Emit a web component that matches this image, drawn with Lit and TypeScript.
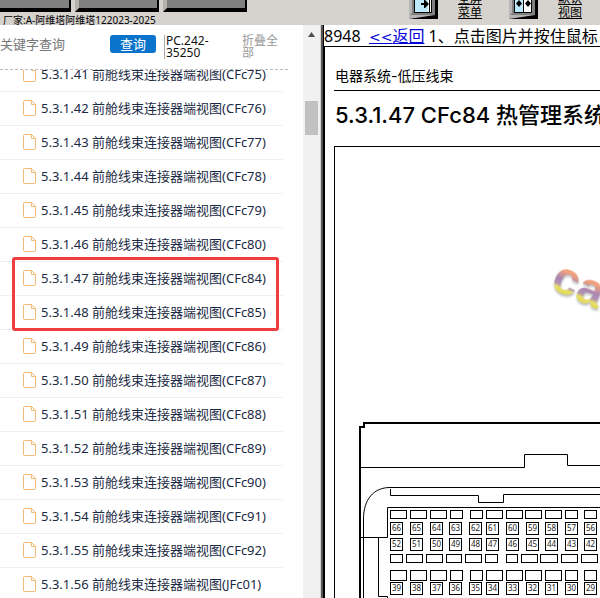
import { LitElement, html, svg, css } from "lit";
import { customElement } from "lit/decorators.js";

const sections = [
  ["41", "CFc75"], ["42", "CFc76"], ["43", "CFc77"], ["44", "CFc78"],
  ["45", "CFc79"], ["46", "CFc80"], ["47", "CFc84"], ["48", "CFc85"],
  ["49", "CFc86"], ["50", "CFc87"], ["51", "CFc88"], ["52", "CFc89"],
  ["53", "CFc90"], ["54", "CFc91"], ["55", "CFc92"], ["56", "JFc01"],
];

@customElement("nav-tree")
class NavTree extends LitElement {
  static styles = css`
    :host { display: flex; flex: none; width: 320px; min-height: 0; background: #fff; }
    .pane { flex: 1; display: flex; flex-direction: column; min-width: 0; }
    .search { display: flex; align-items: center; height: 45px; margin-right: 15px;
      border-bottom: 1px dashed #bbb; box-sizing: border-box; }
    .field { width: 110px; box-sizing: border-box; border: 0; padding: 0; margin: 0 0 7px; outline: 0;
      background: none; font: inherit; font-size: 13px; height: 20px; }
    .field::placeholder { color: #777; opacity: 1; }
    .go { border: 0; padding: 0; width: 46px; height: 18px; border-radius: 3px; background: #0a74cc;
      color: #fff; font: inherit; font-size: 13px; line-height: 18px; margin-bottom: 7px; }
    .model { margin-left: 8px; border-left: 1px solid #aaa; padding-left: 1px; width: 64px;
      font-size: 12px; line-height: 12px; color: #111; }
    .fold { margin-left: 12px; width: 40px; border: 0; padding: 0; background: none; text-align: left;
      font: inherit; font-size: 12px; line-height: 12px; color: #999; }
    .clip { flex: 1; min-height: 0; overflow: hidden; position: relative; }
    .list { list-style: none; margin: -12px 20px 0 0; padding: 0; }
    .row { height: 34px; box-sizing: border-box; border-bottom: 1px solid #f0f0f0; padding-left: 23px; }
    .link { display: flex; align-items: center; gap: 4px; height: 30px; font-size: 13px;
      color: #1b2a44; text-decoration: none; white-space: nowrap; }
    .doc { margin-top: 2px; }
    .mark { position: absolute; left: 12px; top: 187px; width: 267px; height: 74px; box-sizing: border-box;
      border: 3px solid #f03e40; border-radius: 3px; pointer-events: none; }
    .bar { position: relative; width: 17px; background: #f1f1f1; display: flex; flex-direction: column; align-items: center; }
    .thumb { margin-top: 76px; width: 13px; height: 34px; background: #c1c1c1; }
    .up { position: absolute; top: 7px; left: 5px; }
  `;
  render() {
    return html`
      <div class="pane">
        <div class="search">
          <input class="field" aria-label="关键字查询" placeholder="关键字查询" />
          <button class="go">查询</button>
          <div class="model">PC.242-<br />35250</div>
          <button class="fold">折叠全部</button>
        </div>
        <div class="clip">
          <ul class="list">
            ${sections.map(([n, code]) => html`<li class="row"><a class="link" href="#s${n}">
              <svg class="doc" width="14" height="16" viewBox="0 0 14 16" fill="none" stroke="#f3b873">
                <path d="M1.5 .5H8.5L12.5 4.5V14.5Q12.5 15.5 11.5 15.5H1.5Q.5 15.5 .5 14.5V1.5Q.5 .5 1.5 .5Z"/>
                <path d="M8.5 .5V4.5H12.5"/>
              </svg><span>5.3.1.${n} 前舱线束连接器端视图(${code})</span></a></li>`)}
          </ul>
          <div class="mark"></div>
        </div>
      </div>
      <div class="bar">
        <svg class="up" width="7" height="5"><path d="M0 5L3.5 0L7 5Z" fill="#505050"/></svg>
        <div class="thumb"></div>
      </div>`;
  }
}

const shortTop = [[212,259],[271,319],[331,378],[391,427],[451,487],[499,546],[559,606],[616,663],[676,724],[735,772],[794,830]];
const pins = [[212,247],[271,307],[331,367],[388,424],[447,484],[499,535],[558,593],[618,654],[677,713],[735,772],[794,830]];
const shortLow = [[212,247],[260,308],[320,367],[379,424],[437,484],[497,532],[559,593],[604,652],[662,713],[725,772],[784,832]];

const cells = (spans: number[][], y: number, h: number, first = 0) =>
  spans.map(([a, b], i) => {
    const x = Math.floor(320 + a / 3) + 0.5;
    const w = Math.round((b - a) / 3);
    return svg`<rect class="cell" x=${x} y=${y + 0.5} width=${w} height=${h} />
      ${first ? svg`<text class="pin" x=${x + w / 2} y=${y + 9}>${first - i}</text>` : ""}`;
  });

@customElement("wiring-sheet")
class WiringSheet extends LitElement {
  static styles = css`
    :host { display: flex; flex-direction: column; flex: 1; min-width: 0; overflow: hidden; background: #fff; color: #000; }
    .tip { height: 21px; line-height: 23px; font-size: 16px; white-space: pre; }
    .back { color: #0000d8; }
    .chev { font-family: "DejaVu Sans", sans-serif; font-size: 14px; }
    .page { flex: 1; min-height: 0; display: flex; flex-direction: column; border: solid #000; border-width: 1px 0 0 1px; padding-left: 9px; }
    .chapter { height: 44px; box-sizing: border-box; padding: 19px 0 0 1px; border-bottom: 1px solid #000;
      font: 14px/20px Inter, "Noto Sans CJK SC", sans-serif; white-space: nowrap; }
    .title { margin: 0; padding-left: 1px; height: 55px; font: 500 22px/48px Inter, "Noto Sans CJK SC", sans-serif; white-space: nowrap; }
    .figure { flex: 1; min-height: 0; border: solid #000; border-width: 1px 0 0 1px; overflow: hidden; }
    .art { display: block; width: 100%; height: 100%; }
    .line, .cell { fill: none; stroke: #000; stroke-width: 1; }
    .thick { fill: none; stroke: #000; stroke-width: 2; }
    .pin { font-size: 8px; text-anchor: middle; fill: #222; }
    .logo { font: bold 47px "Liberation Sans", sans-serif; fill: url(#hue); filter: drop-shadow(1px 2px 1px #8888); }
  `;
  render() {
    return html`
      <div class="tip">8948  <a class="back" href="#back"><span class="chev">&lt;&lt;</span>返回</a> 1、点击图片并按住鼠标</div>
      <div class="page">
        <div class="chapter">电器系统-低压线束</div>
        <h1 class="title">5.3.1.47 CFc84 热管理系统</h1>
        <div class="figure">
          <svg class="art">
            <defs><linearGradient id="hue" x1="0" y1="0" x2="0" y2="1">
              <stop offset=".4" stop-color="#efa07c"/><stop offset=".56" stop-color="#a987b5"/>
              <stop offset=".66" stop-color="#b294b0"/><stop offset=".72" stop-color="#e8e067"/><stop offset=".84" stop-color="#dcd34e"/>
            </linearGradient></defs>
            <g transform="translate(-335 -147)">
              <text class="logo" x="549" y="288" transform="rotate(24 549 288)">ca</text>
              <path class="thick" d="M360 600V427H364V423H700"/>
              <path class="line" d="M360 467.5H524.5V454.5H567.5V465.5H700"/>
              <path class="line" d="M700 487.5H390C374 487.5 363.5 499 363.5 519V600"/>
              <path class="line" d="M390.5 489V495.5H478.5V502.5H503.5V494.5H700"/>
              <path class="line" d="M700 507.5H387.5V537.5H360M378.5 537.5V596.5H387.5V600"/>
              ${cells(shortTop, 510, 8)}
              ${cells(pins, 522, 12, 66)}
              ${cells(pins, 538, 12, 52)}
              ${cells(shortLow, 554, 8)}
              ${cells(shortTop, 570, 10)}
              ${cells(pins, 582, 12, 39)}
            </g>
          </svg>
        </div>
      </div>`;
  }
}

@customElement("app-root")
class AppRoot extends LitElement {
  static styles = css`
    :host { display: flex; flex-direction: column; height: 100vh; overflow: hidden; background: #fff;
      font-family: "Noto Sans", "Noto Sans CJK SC", sans-serif; color: #000; }
    .top { flex: none; display: flex; height: 25px; background: #d6d3ce; overflow: hidden; }
    .left { flex: none; width: 409px; }
    .tabs { display: flex; gap: 4px; height: 13px; }
    .tab { width: 84px; height: 12px; box-sizing: border-box; padding: 0; background: #808080; border: solid #000;
      border-width: 0 2px 4px 4px; border-left-color: #b5b2ae; }
    .tab.cut { width: 71px; border-left: 0; }
    .maker { padding-left: 3px; font-size: 10px; line-height: 14px; white-space: nowrap; }
    .tool { flex: none; display: flex; width: 100px; }
    .key { width: 29px; height: 19px; padding: 0; border: 0; background: none; }
    .key svg { display: block; }
    .name { width: 24px; margin: -8px 0 0 20px; font-size: 12px; line-height: 14px; color: #000; }
    .body { flex: 1; min-height: 0; display: flex; }
    .split { flex: none; width: 4px; box-sizing: border-box; background: #000; border-left: 1px solid #d6d3ce; }
    .split::before { content: ""; display: block; width: 2px; height: 100%; background: #555; }
  `;
  key(two: boolean) {
    return svg`<svg width="29" height="19">
      <path d="M0 0H29V19H0Z" fill="#000"/><path d="M0 0H26V15L0 19Z" fill="#b5b5b5"/>
      <path d="M3 0H26V15H1L3 13Z" fill="#808080"/>
      <path d="M5.5 -1V12.5H22.5V-1" fill="#bdeafa" stroke="#000"/>
      ${two
        ? svg`<path d="M14 0H22V12H14Z" fill="#fff"/><path d="M14.5 0V12" stroke="#000"/>
          <path d="M10 0L13 3.5L10 7L7 3.5ZM19 0L22 3.5L19 7L16 3.5Z" fill="#000"/>`
        : svg`<path d="M19 0H22V12H19Z" fill="#fff"/><path d="M20.5 0V12" stroke="#000"/>
          <path d="M12 3H15V0H16L20 4L16 8H15V5H12Z" fill="#000"/>`}
    </svg>`;
  }
  render() {
    return html`
      <header class="top">
        <div class="left">
          <div class="tabs">
            <button class="tab cut" aria-label="1"></button>
            <button class="tab" aria-label="2"></button>
            <button class="tab" aria-label="3"></button>
          </div>
          <div class="maker">厂家:A-阿维塔阿维塔122023-2025</div>
        </div>
        <div class="tool"><button class="key" aria-label="全屏菜单">${this.key(false)}</button><a class="name" href="#full">全屏菜单</a></div>
        <div class="tool"><button class="key" aria-label="默认视图">${this.key(true)}</button><a class="name" href="#view">默认视图</a></div>
      </header>
      <div class="body">
        <nav-tree></nav-tree>
        <div class="split"></div>
        <wiring-sheet></wiring-sheet>
      </div>`;
  }
}
